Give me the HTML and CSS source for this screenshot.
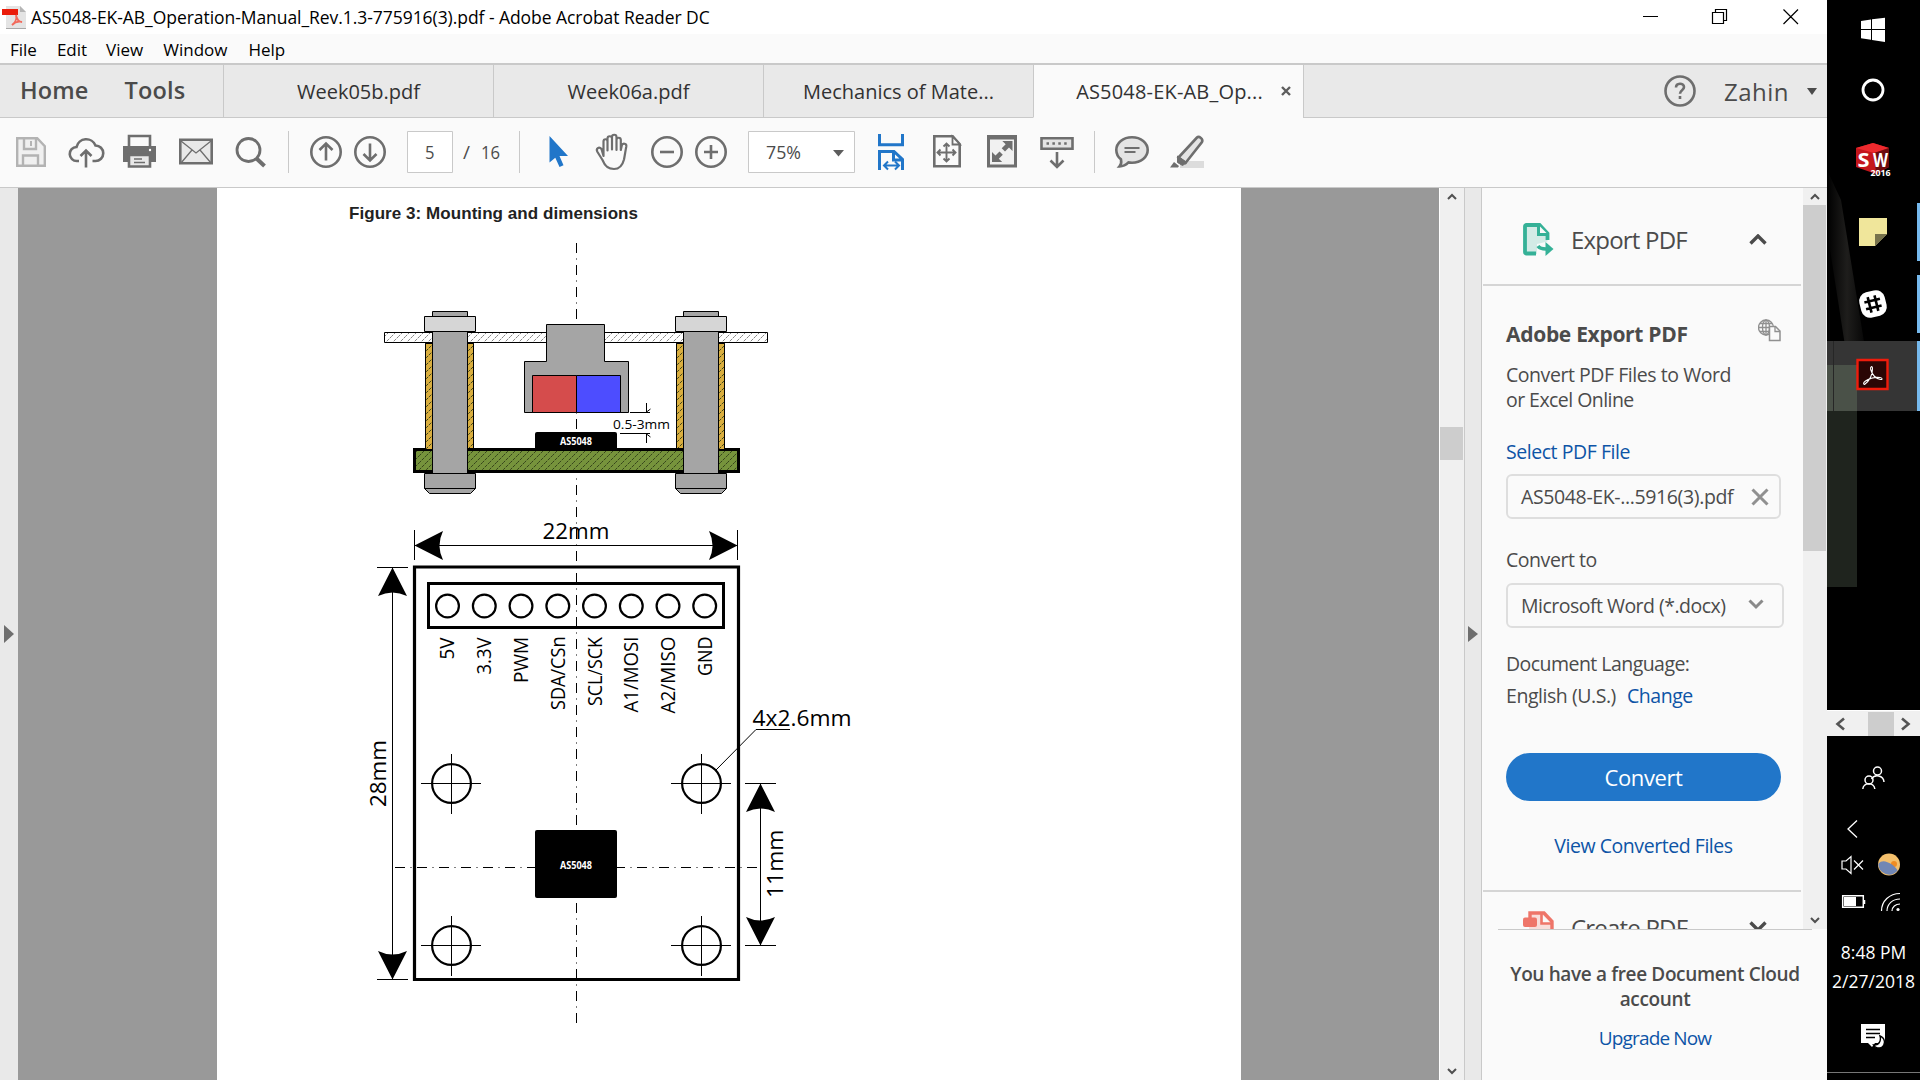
FILE: index.html
```
<!DOCTYPE html>
<html lang="en">
<head>
<meta charset="utf-8">
<title>AS5048-EK-AB_Operation-Manual_Rev.1.3-775916(3).pdf - Adobe Acrobat Reader DC</title>
<link rel="stylesheet" href="styles.css">
</head>
<body>
<div class="app">
  <header class="titlebar">
    <svg class="pdf-logo" width="25" height="25" viewBox="0 0 25 25">
      <path d="M4 1h14l6 6v17H4z" fill="#e4e4e4"/><path d="M18 1l6 6h-6z" fill="#b5b5b5"/><path d="M4 23.500h20" stroke="#a8a8a8"/>
      <path d="M0 4h16v6H0z" fill="#ea1c0a"/>
      <path d="M10 20c3-2 5-6 4-10 1 5 3 7 6 7-4-1-7 0-10 3z" fill="none" stroke="#f26a5c" stroke-width="1.800"/>
    </svg>
    <h1 class="t title">AS5048-EK-AB_Operation-Manual_Rev.1.3-775916(3).pdf - Adobe Acrobat Reader DC</h1>
    <svg class="winctl" width="156" height="16" viewBox="0 0 156 16" fill="none" stroke="#000" stroke-width="1.200">
      <path d="M0 7.500h15M69.500 3.500h11v11h-11zM72.500 3.500v-3h11v11h-3M140.500.500l14.500 14.500M155 .500L140.500 15"/>
    </svg>
  </header>
  <nav class="menubar">
    <span class="t m1">File</span><span class="t m2">Edit</span><span class="t m3">View</span><span class="t m4">Window</span><span class="t m5">Help</span>
  </nav>
  <div class="tabs">
    <div class="fixed-tabs"><span class="t home">Home</span><span class="t tools">Tools</span></div>
    <div class="tab"><span class="t w5">Week05b.pdf</span></div>
    <div class="tab"><span class="t w6">Week06a.pdf</span></div>
    <div class="tab"><span class="t mech">Mechanics of Mate...</span></div>
    <div class="tab active"><span class="t as">AS5048-EK-AB_Op...</span>
      <svg width="10" height="10" viewBox="0 0 10 10"><path d="M1 1l8 8M9 1L1 9" stroke="#5d5d5d" stroke-width="2.400"/></svg></div>
    <div class="account">
      <svg width="32" height="32" viewBox="0 0 32 32" fill="none" stroke="#6e6e6e" stroke-width="2.600"><circle cx="16" cy="16" r="14.500"/><path d="M12 12.500c0-5 8-5 8-.500 0 3.500-4 3-4 6.800" /><path d="M16 21v3"/></svg>
      <span class="t zahin">Zahin</span>
      <svg width="10" height="7" viewBox="0 0 10 7"><path d="M0 0h10L5 7z" fill="#4b4b4b"/></svg>
    </div>
  </div>
  <div class="toolbar">
    <svg class="tools-left" width="530" height="44" viewBox="0 130 530 44" fill="none" stroke="#6e6e6e" stroke-width="2.600">
      <g stroke="#b3b3b3" stroke-width="2.400"><path d="M17.200 138.200h20l7.600 8v19.600H17.200z" fill="#f0f0f0"/><path d="M24 138v11h12v-11M23 166v-10.500h15V166" /><path d="M31 141v5" stroke-width="2"/></g>
      <path d="M79 161h-2a7 7 0 0 1-.500-14 10 10 0 0 1 19-1.500 7.700 7.700 0 0 1 0 15.500h-3M86 167.500v-16M80.500 156l5.500-5.500 5.500 5.500"/>
      <path d="M129 146v-10h21v10" fill="#fafafa"/><path d="M123 146h33v16h-33z" fill="#6e6e6e" stroke="none"/><path d="M129 155h21v11.500h-21z" fill="#e8e8e8"/><path d="M134 159h8M134 162.500h11" stroke-width="1.400"/><circle cx="150" cy="150" r="1.200" fill="#fff" stroke="none"/>
      <path d="M180.300 139.800h31.400v23.400h-31.400z" fill="#e9e9e9"/><path d="M181 141l15 12 15-12M181 163l11-13M211 163l-11-13" stroke-width="1.300"/>
      <circle cx="248.500" cy="150" r="11.500" stroke-width="2.800"/><path d="M256.500 158.500l8 7.500" stroke-width="4"/>
      <path d="M288.500 131v42M519.500 131v42" stroke="#c9c9c9" stroke-width="1"/>
      <circle cx="326" cy="152" r="14.700"/><path d="M326 160.500v-16M319.500 150l6.500-6.500 6.500 6.500"/>
      <circle cx="370" cy="152" r="14.700"/><path d="M370 143.500v16M363.500 154l6.500 6.500 6.500-6.500"/>
      <path d="M407.500 131.500h45v41h-45z" fill="#fff" stroke="#c9c9c9" stroke-width="1"/>
      <g class="svgt" fill="#4b4b4b" stroke="none"><text x="425" y="159" textLength="9.500" lengthAdjust="spacingAndGlyphs">5</text><text x="463" y="159">/</text><text x="481" y="159" textLength="19" lengthAdjust="spacingAndGlyphs">16</text></g>
    </svg>
    <svg class="tools-right" width="700" height="44" viewBox="530 130 700 44" fill="none" stroke="#6e6e6e" stroke-width="2.600">
      <path d="M549.500 136v26.500l5.800-4.800 4.200 9.300 4-1.800-4-9.200h8.500z" fill="#2176c9" stroke="none"/>
      <path d="M603.500 156v-14.500c0-3 4-3 4 0v9-12c0-3 4.500-3 4.500 0v11-12.500c0-3 4.500-3 4.500 0v13-10c0-3 4.300-3 4.300 0v10l1-4.500c1-3 5-2 4.500 1-1 5-1.300 8-2.300 13-1.500 6-4 9.500-10 9.500-7 0-9.500-4-11.500-9l-5-8c-2-3.500 1.500-6 4-3z" stroke-width="2.200" stroke-linejoin="round"/>
      <circle cx="667" cy="152" r="14.700"/><path d="M660 152h14"/>
      <circle cx="711" cy="152" r="14.700"/><path d="M704 152h14M711 145v14"/>
      <path d="M748.500 131.500h106v41h-106z" fill="#fff" stroke="#c9c9c9" stroke-width="1"/>
      <text class="svgt" x="766" y="159" fill="#4b4b4b" stroke="none" textLength="35" lengthAdjust="spacingAndGlyphs">75%</text>
      <path d="M833 150h11l-5.500 6.500z" fill="#5d5d5d" stroke="none"/>
      <g stroke="#2176c9" stroke-width="3"><path d="M879.500 134v10.700h23V134M879.500 170v-18.500h14.500l8.500 8V170M893.500 151.500v8.500h9"/><path d="M884 165.500h14M888 161.500l-4 4 4 4M895 161.500l4 4-4 4" stroke-width="2"/></g>
      <path d="M934.300 136.300h18.400l7 8v22h-25.400z"/><path d="M952.500 136.500v8h7.500z" fill="#fafafa" stroke-width="1.800"/>
      <path d="M946.500 144v17M938 152.500h17M943.500 146.500l3-3 3 3M943.500 158.500l3 3 3-3M940.500 149.500l-3 3 3 3M952.500 149.500l3 3-3 3" stroke-width="1.900"/>
      <path d="M988.500 136.500h27v29.500h-27z" fill="#f1f1f1" stroke-width="3"/><path d="M988 137.500h28" stroke-width="4"/><path d="M1012.500 141v10l-3.500-3.500-4 4-3.300-3.300 4-4-3.400-3.200zM992 162v-10l3.500 3.500 4-4 3.300 3.300-4 4 3.400 3.200z" fill="#6e6e6e" stroke="none"/>
      <path d="M1041.500 138.300h31v10.400h-31z" fill="#e4e4e4"/><path d="M1046.500 143.500h22" stroke-dasharray="2.500 3.400"/><path d="M1057 152v14M1050.500 160.500l6.500 6.500 6.500-6.500"/>
      <path d="M1094.500 131v42" stroke="#c9c9c9" stroke-width="1"/>
      <path d="M1132 137.300c9 0 15.700 5.700 15.700 12.700s-6.700 12.700-15.700 12.700l-3.500-.300c-2.500 2.600-5.500 4-9 4 1.800-2 2-4.500 1.500-7a12 12 0 0 1-4.700-9.400c0-7 6.700-12.700 15.700-12.700z" fill="#e4e4e4"/><path d="M1124.500 148h15M1124.500 152h11" stroke-width="1.800"/>
      <path d="M1180 161h24v7h-24z" fill="#dcdcdc" stroke="none"/><path d="M1178.500 157.500l18.500-20c2-2 6.500 1.500 5 4.500l-16.500 21z" fill="#e4e4e4"/><path d="M1177.500 156l9.500 6.500-4.500 3-5-3z" fill="#6e6e6e" stroke-width="1"/><path d="M1174 162l5 4-1 1.500h-8z" fill="#6e6e6e" stroke="none"/>
    </svg>
  </div>
  <main class="work">
    <div class="left-strip"><svg width="10" height="18" viewBox="0 0 10 18"><path d="M0 0l10 9-10 9z" fill="#6e6e6e"/></svg></div>
    <div class="canvas">
      <div class="page">
        <svg width="1024" height="892" viewBox="217 188 1024 892">
          <defs>
            <pattern id="hatchLight" width="7" height="7" patternUnits="userSpaceOnUse"><path d="M-1 8L8-1M-1 1L1-1M6 8l2-2" stroke="#666" stroke-width=".8" stroke-dasharray="3 1"/></pattern>
            <pattern id="hatchDark" width="7" height="7" patternUnits="userSpaceOnUse"><path d="M-1 8L8-1M-1 1L1-1M6 8l2-2" stroke="#2e3a16" stroke-width=".9" stroke-dasharray="3 1"/></pattern>
            <g id="bolt" stroke="#000" fill="#a5a5a5">
              <path d="M425.500 343.500h48v106h-48z" fill="#d9ae3f"/><path d="M425.500 343.500h48v106h-48z" fill="url(#hatchDark)"/>
              <path d="M432.500 311.500h35v162h-35z"/><path d="M424.500 316.500h51v15h-51z" fill="#d6d6d6"/>
              <path d="M424.500 473.500h51v15l-5 5h-41l-5-5z"/><path d="M424.500 488.500h51"/>
            </g>
            <g id="hole" fill="none" stroke="#000"><circle cx="451.500" cy="783.500" r="19.400" stroke-width="2.200"/><path d="M421 783.500h60M451.500 754v60"/></g>
            <path id="head" d="M0 0l14.500 28.500q-14.500-7-29 0z"/>
          </defs>
          <text class="fig" x="349" y="219" textLength="289">Figure 3: Mounting and dimensions</text>
          <path class="line" d="M384.500 332.500h383v10h-383z" style="fill:url(#hatchLight)"/>
          <path d="M414.500 449.500h324v22h-324z" fill="#76933c"/><path d="M414.500 449.500h324v22h-324z" fill="url(#hatchDark)" stroke="#000" stroke-width="3"/>
          <use href="#bolt"/><use href="#bolt" x="251"/>
          <path d="M576.500 243v783" class="axis"/>
          <path d="M546.500 324.500h58v37h24v51h-104v-51h22z" fill="#a5a5a5" stroke="#000"/>
          <path d="M532.500 375.500h44v37h-44z" fill="#d54c4c" stroke="#000"/><path d="M576.500 375.500h44v37h-44z" fill="#4d4dff" stroke="#000"/>
          <path d="M468 450h215v21H468z" fill="#76933c"/><path d="M468 451h215v20H468z" fill="url(#hatchDark)"/><path d="M468 449.500h215M468 471.500h215" stroke="#000" stroke-width="3"/>
          <rect x="535" y="432" width="82" height="18" rx="2"/>
          <text class="chip" x="560" y="444.500" textLength="32" lengthAdjust="spacingAndGlyphs">AS5048</text>
          <path class="line" d="M630 412.500h20M646.500 403v9l4-3M620 433.500h30M646.500 443v-9l4 3"/>
          <text class="gap" x="613" y="429" textLength="57" lengthAdjust="spacingAndGlyphs">0.5-3mm</text>
          <path class="line" d="M414.500 530v30M737.500 530v30M414 545.500h323M377 567.500h31M377 979.500h31M392.500 568v411"/>
          <use href="#head" transform="translate(414.500 545.500) rotate(-90)"/><use href="#head" transform="translate(737.500 545.500) rotate(90)"/>
          <use href="#head" transform="translate(392.500 567.500)"/><use href="#head" transform="translate(392.500 979.500) rotate(180)"/>
          <text class="dim" x="542.500" y="539" textLength="67" lengthAdjust="spacingAndGlyphs">22mm</text>
          <text class="dim" transform="translate(386 807) rotate(-90)" textLength="67" lengthAdjust="spacingAndGlyphs">28mm</text>
          <path d="M414.500 567h324v412.500h-324z" fill="none" stroke="#000" stroke-width="3.200"/>
          <path d="M428.500 583.500h295v44h-295z" fill="none" stroke="#000" stroke-width="3"/>
          <g fill="none" stroke="#000" stroke-width="2.200"><circle cx="447.500" cy="606" r="11.400"/><circle cx="484.300" cy="606" r="11.400"/><circle cx="521" cy="606" r="11.400"/><circle cx="557.800" cy="606" r="11.400"/><circle cx="594.500" cy="606" r="11.400"/><circle cx="631.300" cy="606" r="11.400"/><circle cx="668" cy="606" r="11.400"/><circle cx="704.700" cy="606" r="11.400"/></g>
          <g class="pins">
            <text transform="translate(454 659.500) rotate(-90)" textLength="22" lengthAdjust="spacingAndGlyphs">5V</text>
            <text transform="translate(491 674.500) rotate(-90)" textLength="37" lengthAdjust="spacingAndGlyphs">3.3V</text>
            <text transform="translate(528 683) rotate(-90)" textLength="46" lengthAdjust="spacingAndGlyphs">PWM</text>
            <text transform="translate(565 710) rotate(-90)" textLength="73.500" lengthAdjust="spacingAndGlyphs">SDA/CSn</text>
            <text transform="translate(601.500 706) rotate(-90)" textLength="69" lengthAdjust="spacingAndGlyphs">SCL/SCK</text>
            <text transform="translate(638 712.500) rotate(-90)" textLength="76" lengthAdjust="spacingAndGlyphs">A1/MOSI</text>
            <text transform="translate(675 713.500) rotate(-90)" textLength="77" lengthAdjust="spacingAndGlyphs">A2/MISO</text>
            <text transform="translate(711.500 676) rotate(-90)" textLength="39.500" lengthAdjust="spacingAndGlyphs">GND</text>
          </g>
          <text class="dim" x="752.500" y="726" textLength="99" lengthAdjust="spacingAndGlyphs">4x2.6mm</text>
          <path class="line" d="M790 729.500h-34L716 770"/>
          <use href="#hole"/><use href="#hole" x="250"/><use href="#hole" y="162"/><use href="#hole" x="250" y="162"/>
          <path d="M395 867.500h365" class="axis"/>
          <rect x="535" y="830" width="82" height="68" rx="2"/>
          <text class="chip" x="560" y="868.500" textLength="32" lengthAdjust="spacingAndGlyphs">AS5048</text>
          <path class="line" d="M745 783.500h31M745 945.500h31M760.500 784v161"/>
          <use href="#head" transform="translate(760.500 783.500)"/><use href="#head" transform="translate(760.500 945.500) rotate(180)"/>
          <text class="dim" transform="translate(783 898) rotate(-90)" textLength="68.500" lengthAdjust="spacingAndGlyphs">11mm</text>
        </svg>
      </div>
    </div>
    <div class="scroll doc-scroll">
      <svg width="10" height="7" viewBox="0 0 10 7"><path d="M1 6l4-4 4 4" class="arr"/></svg>
      <div class="thumb"></div>
      <svg class="down" width="10" height="7" viewBox="0 0 10 7"><path d="M1 1l4 4 4-4" class="arr"/></svg>
    </div>
    <div class="right-strip"><svg width="10" height="16" viewBox="0 0 10 16"><path d="M0 0l10 8-10 8z" fill="#6e6e6e"/></svg></div>
    <aside class="side">
      <div class="side-top">
        <div class="panel">
          <div class="sect">
            <svg width="31" height="33" viewBox="0 0 31 33"><path d="M2 2h14.500l8 8v8.500L14 21v10H2z" fill="#d3ebe6"/><path d="M13 30.500H3.500q-1.500 0-1.500-1.500V3.500Q2 2 3.500 2h13l8 8.500V17" fill="none" stroke="#35b197" stroke-width="3.800"/><path d="M15.500 2v9.500H25" fill="#fafafa" stroke="#35b197" stroke-width="3"/><path d="M15 23c2 3 5 3 8 3" fill="none" stroke="#35b197" stroke-width="3.600"/><path d="M22.500 19l8 7-8 7z" fill="#35b197"/></svg>
            <span class="t exp">Export PDF</span>
            <svg class="chev" width="18" height="11" viewBox="0 0 18 11"><path d="M1.500 9.500L9 2l7.500 7.500" fill="none" stroke="#4b4b4b" stroke-width="3.400"/></svg>
          </div>
          <div class="body">
            <div class="head"><b class="t aep">Adobe Export PDF</b>
              <svg width="23" height="23" viewBox="0 0 23 23" fill="none" stroke="#909090" stroke-width="1.300"><circle cx="8" cy="8.500" r="7.500"/><ellipse cx="8" cy="8.500" rx="3.500" ry="7.500"/><path d="M8 1v15M.5 8.500h15M2 4.500h12M2 12.500h12"/><path d="M11.500 7.500h6l4.500 4.500v9.500H11.500z" fill="#fafafa" stroke-width="1.500"/><path d="M17 8v4.500h5"/></svg></div>
            <p class="desc"><span class="t d1">Convert PDF Files to Word</span><br><span class="t d2">or Excel Online</span></p>
            <a class="t sel">Select PDF File</a>
            <div class="box file"><span class="t fn">AS5048-EK-...5916(3).pdf</span><svg width="18" height="18" viewBox="0 0 18 18"><path d="M1.500 1.500l15 15M16.500 1.500l-15 15" stroke="#909090" stroke-width="3"/></svg></div>
            <div class="t cto">Convert to</div>
            <div class="box fmt"><span class="t mw">Microsoft Word (*.docx)</span><svg width="16" height="14" viewBox="0 0 16 14"><path d="M1.500 1.500L8 8l6.500-6.500" fill="none" stroke="#8a8a8a" stroke-width="3"/></svg></div>
            <div class="t dl">Document Language:</div>
            <div class="lang"><span class="t en">English (U.S.)</span><a class="t chg">Change</a></div>
            <button class="btn"><span class="t cv">Convert</span></button>
            <a class="view"><span class="t vc">View Converted Files</span></a>
          </div>
          <div class="create">
            <svg width="31" height="33" viewBox="0 0 31 33"><path d="M6 1.500h15l8.500 9V32H6z" fill="#f8dedb"/><path d="M7 8V2h14l8 8.500V32" fill="none" stroke="#ee7569" stroke-width="3.400"/><path d="M18.500 3v9.500H28" fill="#fafafa" stroke="#ee7569" stroke-width="2.600"/><rect y="6.500" width="14" height="9.500" rx="2" fill="#ee7569"/></svg>
            <span class="t cre">Create PDF</span>
            <svg class="chev" width="18" height="11" viewBox="0 0 18 11"><path d="M1.500 1.500L9 9l7.500-7.500" fill="none" stroke="#4b4b4b" stroke-width="3.400"/></svg>
          </div>
        </div>
        <div class="scroll side-scroll">
          <svg width="10" height="7" viewBox="0 0 10 7"><path d="M1 6l4-4 4 4" class="arr"/></svg>
          <div class="thumb"></div>
          <svg class="down" width="10" height="7" viewBox="0 0 10 7"><path d="M1 1l4 4 4-4" class="arr"/></svg>
        </div>
      </div>
      <footer class="foot">
        <p class="free"><span class="t f1">You have a free Document Cloud</span><br><span class="t f2">account</span></p>
        <a class="t up">Upgrade Now</a>
      </footer>
    </aside>
  </main>
</div>
<aside class="taskbar">
  <svg class="apps" width="93" height="710" viewBox="1827 0 93 710">
    <defs><linearGradient id="beam" x1="0" x2="1"><stop offset="0" stop-color="#000"/><stop offset=".5" stop-color="#262523"/><stop offset="1" stop-color="#050505"/></linearGradient></defs>
    <path d="M1827 170l14 30 26 160v50h-12l-28-180z" fill="url(#beam)" opacity=".8"/>
    <path d="M1827 411h30v176h-30z" fill="#1f241e"/>
    <path d="M1827 341h90v70h-90z" fill="#353535"/><path d="M1827 365h30v46h-30z" fill="#4a5148"/><path d="M1833.500 341v70" stroke="#262626"/>
    <path d="M1917 203h3v58h-3zM1917 275h3v58h-3zM1917 341h3v70h-3z" fill="#76b9ed"/>
    <path d="M1861 21l10-1.500V29h-10zM1872 19.300l13-1.500V29h-13zM1861 30h10v9.700l-10-1.500zM1872 30h13v12l-13-2z" fill="#fff"/>
    <circle cx="1873" cy="90" r="10" fill="none" stroke="#fff" stroke-width="2.800"/>
    <path d="M1873 143l16 5v19l-13 7-20-7v-19z" fill="#c4161c"/><path d="M1873 143l16 5-15 5-18-5z" fill="#ee2a2e"/><path d="M1874 153l15-5v19l-13 6z" fill="#6d0a0e"/>
    <g class="sw"><text x="1857.500" y="167" font-size="19" textLength="12" lengthAdjust="spacingAndGlyphs">S</text><text x="1873" y="166.500" font-size="20" textLength="15" lengthAdjust="spacingAndGlyphs">W</text><text x="1870.500" y="175.500" font-size="9" textLength="20" lengthAdjust="spacingAndGlyphs">2016</text></g>
    <path d="M1859 218h28v16l-12 12h-16z" fill="#f0e69b"/><path d="M1875 246v-12h12z" fill="#77724c"/>
    <g transform="rotate(-14 1873 304)"><rect x="1860" y="291" width="26" height="26" rx="9" fill="#fff"/><path d="M1869.500 296v16M1876.500 296v16M1865 300.500h16M1865 307.500h16" stroke="#000" stroke-width="2.600"/></g>
    <path d="M1857.500 360h30v29h-30z" fill="#2a0605" stroke="#ee1c0c" stroke-width="2.400"/>
    <path d="M1864.500 384.500c4-3 8-9 8-16-.2-3-2.500-2-1.800 1 1.500 5.500 5.500 9 9.800 10 2 .4 2.300-1.600-.5-2-5-.7-10.500 1-14.500 3.500-2.200 1.500-2.500 3-1 3.500z" fill="none" stroke="#fff" stroke-width="1.100"/>
  </svg>
  <div class="hscroll"><svg width="10" height="14" viewBox="0 0 10 14"><path d="M9 1.500L2.500 7 9 12.500" fill="none" stroke="#555" stroke-width="2.600"/></svg><i></i><svg width="10" height="14" viewBox="0 0 10 14"><path d="M1 1.500L7.500 7 1 12.500" fill="none" stroke="#555" stroke-width="2.600"/></svg></div>
  <svg class="tray" width="93" height="196" viewBox="1827 736 93 196" fill="none" stroke="#fff" stroke-width="1.500">
    <circle cx="1877.500" cy="771" r="4"/><path d="M1871.500 779c3-5 12-4 12.500 3"/><circle cx="1869" cy="780" r="4"/><path d="M1862.800 789c.5-7 11.500-7 12 0"/>
    <path d="M1857 820.500l-9 8.500 9 8.500" stroke-width="1.300"/>
    <path d="M1842 861h4l5-4.500v17l-5-4.500h-4zM1854 860.500l9 9M1863 860.500l-9 9" stroke-width="1.200"/>
    <g stroke="none"><circle cx="1889" cy="864.500" r="11" fill="#f4c06c"/><circle cx="1894" cy="864" r="3" fill="#f08c22"/><path d="M1878.200 864c4-5 9-2 13 0 3 2 5 4 6.500 6.500a11 11 0 0 1-19.500-6.500z" fill="#7187b5"/></g>
    <path d="M1842.700 895.700h20.600v11.600h-20.600zM1864.500 900v4"/><path d="M1844 897h12v9h-12z" fill="#fff" stroke="none"/>
    <path d="M1881.500 911c0-10 8-17.500 18.500-17.500M1887 911c0-7 5.500-12 13-12M1892 911c0-4 3.500-7 8-7" stroke-width="1.200"/><circle cx="1898" cy="909.500" r="1.600" fill="#fff" stroke="none"/>
  </svg>
  <div class="clock"><span class="t tm">8:48 PM</span><span class="t dt">2/27/2018</span></div>
  <svg class="action" width="25" height="25" viewBox="0 0 25 25"><path d="M0 0h24v19H14l-3 4-4-4H0z" fill="#fff"/><path d="M5 5.500h14M5 9.500h14M5 13.500h9" stroke="#000" stroke-width="1.300"/><path d="M19 12c5 2 6 8 2 11-3 2-7 1-8.500-2 5 1 8-4 6.500-9z" fill="#fff" stroke="#000" stroke-width="1.400"/></svg>
  <div class="peek"></div>
</aside>
</body>
</html>
```
FILE: styles.css
```
* { box-sizing: border-box; }
body { margin: 0; width: 1920px; height: 1080px; overflow: hidden; display: flex; background: #000; font-family: "Open Sans", "Noto Sans", sans-serif; color: #4b4b4b; }
svg { display: block; flex: none; }
.t { white-space: nowrap; }
.app { width: 1827px; height: 1080px; display: flex; flex-direction: column; background: #fafafa; }

.titlebar { height: 34px; flex: none; display: flex; align-items: center; background: #fff; padding: 0 28px 0 2px; }
.title { margin: 0 0 0 4px; flex: 1; font-size: 17.5px; font-weight: 400; color: #000; letter-spacing: -.055px; }
.menubar { height: 31px; flex: none; display: flex; align-items: center; padding: 2px 0 0 10px; border-bottom: 2px solid #c9c9c9; font-size: 17px; color: #000; }
.menubar span { margin-right: 20px; }
.menubar .m2 { margin-right: 19px; }
.menubar .m4 { margin-right: 21px; }

.tabs { height: 53px; flex: none; display: flex; background: #e9e9e9; color: #323232; font-size: 20px; }
.fixed-tabs { width: 223px; display: flex; align-items: center; padding: 0 0 2px 20px; gap: 36px; border-bottom: 1px solid #c9c9c9; font-size: 23.5px; font-weight: 600; color: #4b4b4b; letter-spacing: .15px; }
.tab { width: 270px; display: flex; align-items: center; justify-content: center; border-left: 1px solid #c9c9c9; border-bottom: 1px solid #c9c9c9; }
.tab.active { background: #fafafa; border-bottom-color: #fafafa; padding-left: 30px; gap: 18px; letter-spacing: .18px; }
.account { flex: 1; display: flex; align-items: center; justify-content: flex-end; border-left: 1px solid #c9c9c9; border-bottom: 1px solid #c9c9c9; padding-right: 10px; font-size: 24px; color: #4b4b4b; letter-spacing: .5px; }
.zahin { margin: 0 18px 0 28px; }

.toolbar { height: 70px; flex: none; display: flex; padding-top: 12px; border-bottom: 1px solid #c9c9c9; }
.svgt { font-size: 19px; }

.work { flex: 1; min-height: 0; display: flex; }
.left-strip { width: 18px; background: #e9e9e9; display: flex; align-items: flex-start; padding: 437px 0 0 4px; }
.canvas { width: 1421px; background: #999; padding-left: 199px; overflow: hidden; }
.page { width: 1024px; height: 892px; background: #fff; }
.fig { font: bold 17px "Liberation Sans", sans-serif; fill: #222; }
.line { fill: none; stroke: #000; stroke-width: 1; }
.axis { fill: none; stroke: #000; stroke-dasharray: 10 5.500 1 5.500; }
.chip { font-size: 10.500px; font-weight: 700; fill: #fff; }
.dim { font-size: 22px; fill: #000; }
.gap { font-size: 13.500px; fill: #000; }
.pins { font-size: 19.500px; fill: #000; }

.scroll { display: flex; flex-direction: column; align-items: center; background: #f0f0f0; padding-top: 5px; }
.scroll .thumb { align-self: stretch; background: #cdcdcd; }
.scroll .down { margin-top: auto; }
.arr { fill: none; stroke: #505050; stroke-width: 2; }
.doc-scroll { width: 26px; border-left: 1px solid #fff; border-right: 1px solid #c9c9c9; padding-bottom: 5px; }
.doc-scroll .thumb { margin: 227px 1px 0 0; height: 33px; }
.right-strip { width: 17px; background: #e9e9e9; border-right: 1px solid #c9c9c9; padding: 438px 0 0 3px; }
.side { width: 345px; display: flex; flex-direction: column; }
.side-top { height: 741px; display: flex; overflow: hidden; }
.panel { width: 321px; }
.side-scroll { width: 24px; padding-bottom: 5px; }
.side-scroll .thumb { margin: 5px 1px 0 0; height: 346px; }

.sect { height: 98px; margin: 0 2px 0 1px; padding: 6px 34px 0 40px; display: flex; align-items: center; border-bottom: 2px solid #d5d5d5; font-size: 24px; letter-spacing: -.8px; }
.sect .exp, .create .cre { margin-left: 17px; }
.chev { margin-left: auto; }
.body { padding: 31px 0 0 24px; height: 604px; font-size: 19.500px; letter-spacing: -.45px; }
.head { width: 275px; display: flex; justify-content: space-between; font-size: 21px; line-height: 34px; letter-spacing: -.3px; }
.head svg { margin-top: 2px; }
.desc { margin: 11px 0 0; line-height: 25px; }
.d2 { letter-spacing: -.55px; }
a { color: #0d54a6; }
.sel { display: block; margin-top: 25px; line-height: 30px; }
.box { height: 45px; border: 2px solid #dedede; border-radius: 6px; display: flex; align-items: center; justify-content: space-between; }
.file { width: 275px; margin-top: 7px; padding: 0 10px 0 13px; letter-spacing: -.37px; }
.fmt { width: 278px; margin-top: 8px; padding: 0 18px 0 13px; letter-spacing: -.52px; }
.cto { margin-top: 26px; line-height: 30px; }
.dl { margin-top: 21px; line-height: 30px; letter-spacing: -.54px; }
.lang { line-height: 34px; display: flex; gap: 11px; }
.btn { width: 275px; height: 48px; margin-top: 40px; padding: 0; border: 0; border-radius: 24px; background: #2176c9; color: #fff; font: 22px "Open Sans", sans-serif; letter-spacing: -.4px; display: flex; align-items: center; justify-content: center; }
.view { width: 275px; margin-top: 27px; display: block; text-align: center; line-height: 36px; }
.create { height: 70px; margin: 0 2px 0 1px; padding: 19px 34px 0 40px; display: flex; align-items: flex-start; border-top: 2px solid #d5d5d5; font-size: 24px; line-height: 34px; letter-spacing: -.8px; }
.create .chev { margin-top: 10px; }

.foot { flex: 1; text-align: center; margin: 0 15px 0 16px; border-top: 1px solid #c9c9c9; font-size: 19px; letter-spacing: -.36px; }
.free { margin: 32px 0 0; font-weight: 600; line-height: 25px; }
.up { display: block; margin-top: 11px; line-height: 30px; letter-spacing: -.85px; }

.taskbar { width: 93px; height: 1080px; display: flex; flex-direction: column; background: #000; color: #fff; }
.sw { font-weight: 700; fill: #fff; }
.hscroll { height: 26px; background: #f0f0f0; border-top: 1px solid #fff; display: flex; align-items: center; padding: 0 8px; }
.hscroll i { width: 26px; height: 24px; background: #cdcdcd; margin: 0 7px 0 23px; }
.clock { display: flex; flex-direction: column; align-items: center; font-size: 17.500px; line-height: 29px; margin-top: 6px; }
.action { margin: 28px 0 0 34px; }
.peek { height: 8px; margin-top: auto; border-top: 1px solid #777; }
```
